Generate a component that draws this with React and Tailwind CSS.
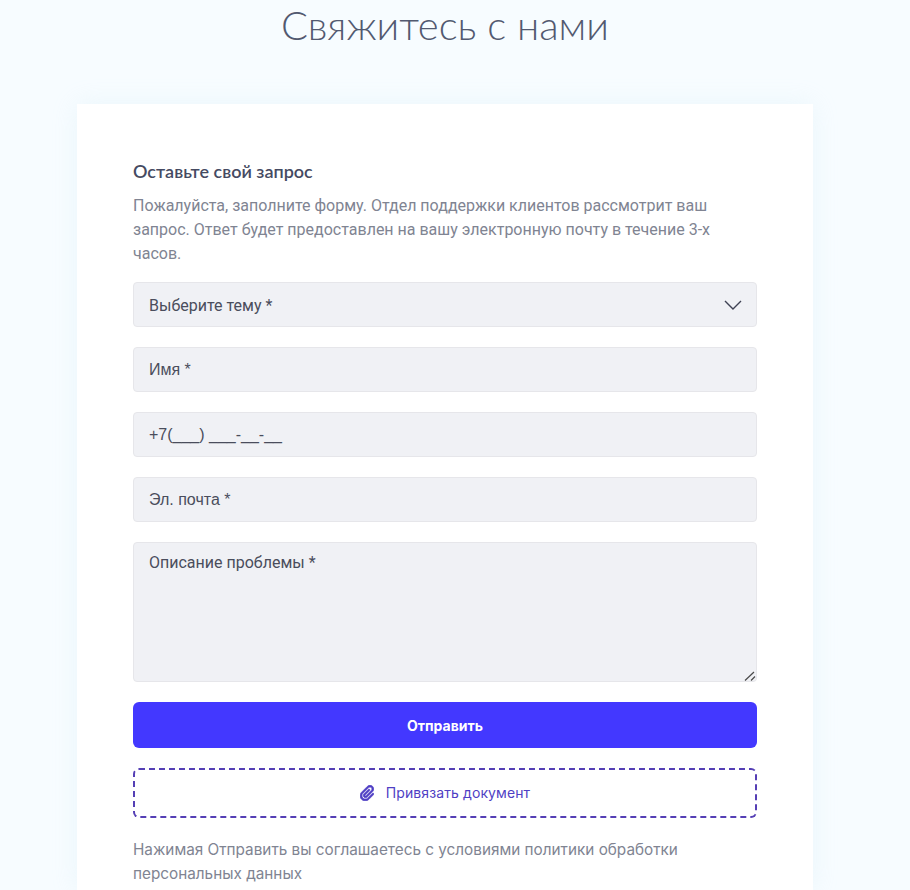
import React from "react";

const boxCls =
  "block w-full h-[45px] rounded-[4px] border border-[#e6e6ea] bg-[#f0f1f5] px-[15px] text-[16px] outline-none";
const inputCls =
  boxCls +
  " pt-[1px] font-['Liberation_Sans',sans-serif] text-[#4a4d5c] placeholder:text-[#4a4d5c] placeholder:opacity-100";

function Clip() {
  return (
    <svg width="14" height="16" viewBox="0 0 448 512" fill="#4f3fc4" stroke="#4f3fc4" strokeWidth="24" className="shrink-0">
      <path d="M364.2 83.8c-24.4-24.4-64-24.4-88.4 0l-184 184c-42.1 42.1-42.1 110.3 0 152.4s110.3 42.1 152.4 0l152-152c10.9-10.9 28.7-10.9 39.6 0s10.9 28.7 0 39.6l-152 152c-64 64-167.6 64-231.6 0s-64-167.6 0-231.6l184-184c46.3-46.3 121.3-46.3 167.6 0s46.3 121.3 0 167.6l-176 176c-28.6 28.6-75 28.6-103.6 0s-28.6-75 0-103.6l144-144c10.9-10.9 28.7-10.9 39.6 0s10.9 28.7 0 39.6l-144 144c-6.7 6.7-6.7 17.7 0 24.4s17.7 6.7 24.4 0l176-176c24.4-24.4 24.4-64 0-88.4z" />
    </svg>
  );
}

export default function App() {
  return (
    <div className="h-[890px] w-[910px] overflow-hidden bg-[#f7fcff]">
      <div className="w-[890px]">
        <h1 className="h-[104px] pt-[1px] text-center font-['Lato',sans-serif] text-[40px] font-light leading-[48px] text-[#525970]">
          Свяжитесь с нами
        </h1>
        <div className="mx-auto h-[786px] w-[736px] bg-white px-[56px] pt-[55px] shadow-[0_0_24px_rgba(190,225,235,0.2)]">
          <h2 className="font-['Lato',sans-serif] text-[18px] font-semibold leading-[24px] text-[#454a62]">
            Оставьте свой запрос
          </h2>
          <p className="mt-[11px] font-['Roboto',sans-serif] text-[16px] leading-[24.2px] text-[#808492]">
            Пожалуйста, заполните форму. Отдел поддержки клиентов рассмотрит ваш запрос. Ответ будет предоставлен на вашу электронную почту в течение 3-х часов.
          </p>
          <form className="mt-[15.4px] flex flex-col gap-[20px]">
            <div className={boxCls + " flex items-center justify-between pr-[14px] pt-[3px] font-['Roboto',sans-serif] text-[#4a4d5c]"}>
              <span>Выберите тему *</span>
              <svg width="18" height="10" viewBox="0 0 18 10" fill="none" stroke="#3f4254" strokeWidth="1.4" className="-mt-[3px]">
                <path d="M1 1l8 8 8-8" />
              </svg>
            </div>
            <input className={inputCls} placeholder="Имя *" />
            <input className={inputCls} placeholder="+7(___) ___-__-__" />
            <input className={inputCls} placeholder="Эл. почта *" />
            <div className="relative h-[140px]">
              <textarea
                className="block h-full w-full resize-none rounded-[4px] border border-[#e6e6ea] bg-[#f0f1f5] px-[15px] py-[8px] font-['Roboto',sans-serif] text-[16px] leading-[24px] text-[#4a4d5c] outline-none placeholder:text-[#4a4d5c] placeholder:opacity-100"
                placeholder="Описание проблемы *"
              />
              <svg width="12" height="10" viewBox="0 0 12 10" fill="none" stroke="#4a4a4a" strokeWidth="1.2" className="absolute right-[1px] bottom-[1px]">
                <path d="M1 9.5L10 1M7 9.5L11 5.5" />
              </svg>
            </div>
            <button
              type="button"
              className="h-[46px] w-full rounded-[6px] bg-[#4338ff] font-['Inter',sans-serif] text-[14px] font-bold text-white"
            >
              Отправить
            </button>
            <button
              type="button"
              className="flex h-[50px] w-full items-center justify-center gap-[12px] rounded-[6px] border-2 border-dashed border-[#553fb5] pb-[1px] font-['Inter',sans-serif] text-[14px] tracking-[0.1px] text-[#4f3fc4]"
            >
              <Clip />
              Привязать документ
            </button>
          </form>
          <p className="mt-[20px] font-['Inter',sans-serif] text-[15.3px] leading-[24px] text-[#808492]">
            Нажимая Отправить вы соглашаетесь с условиями политики обработки персональных данных
          </p>
        </div>
      </div>
    </div>
  );
}
